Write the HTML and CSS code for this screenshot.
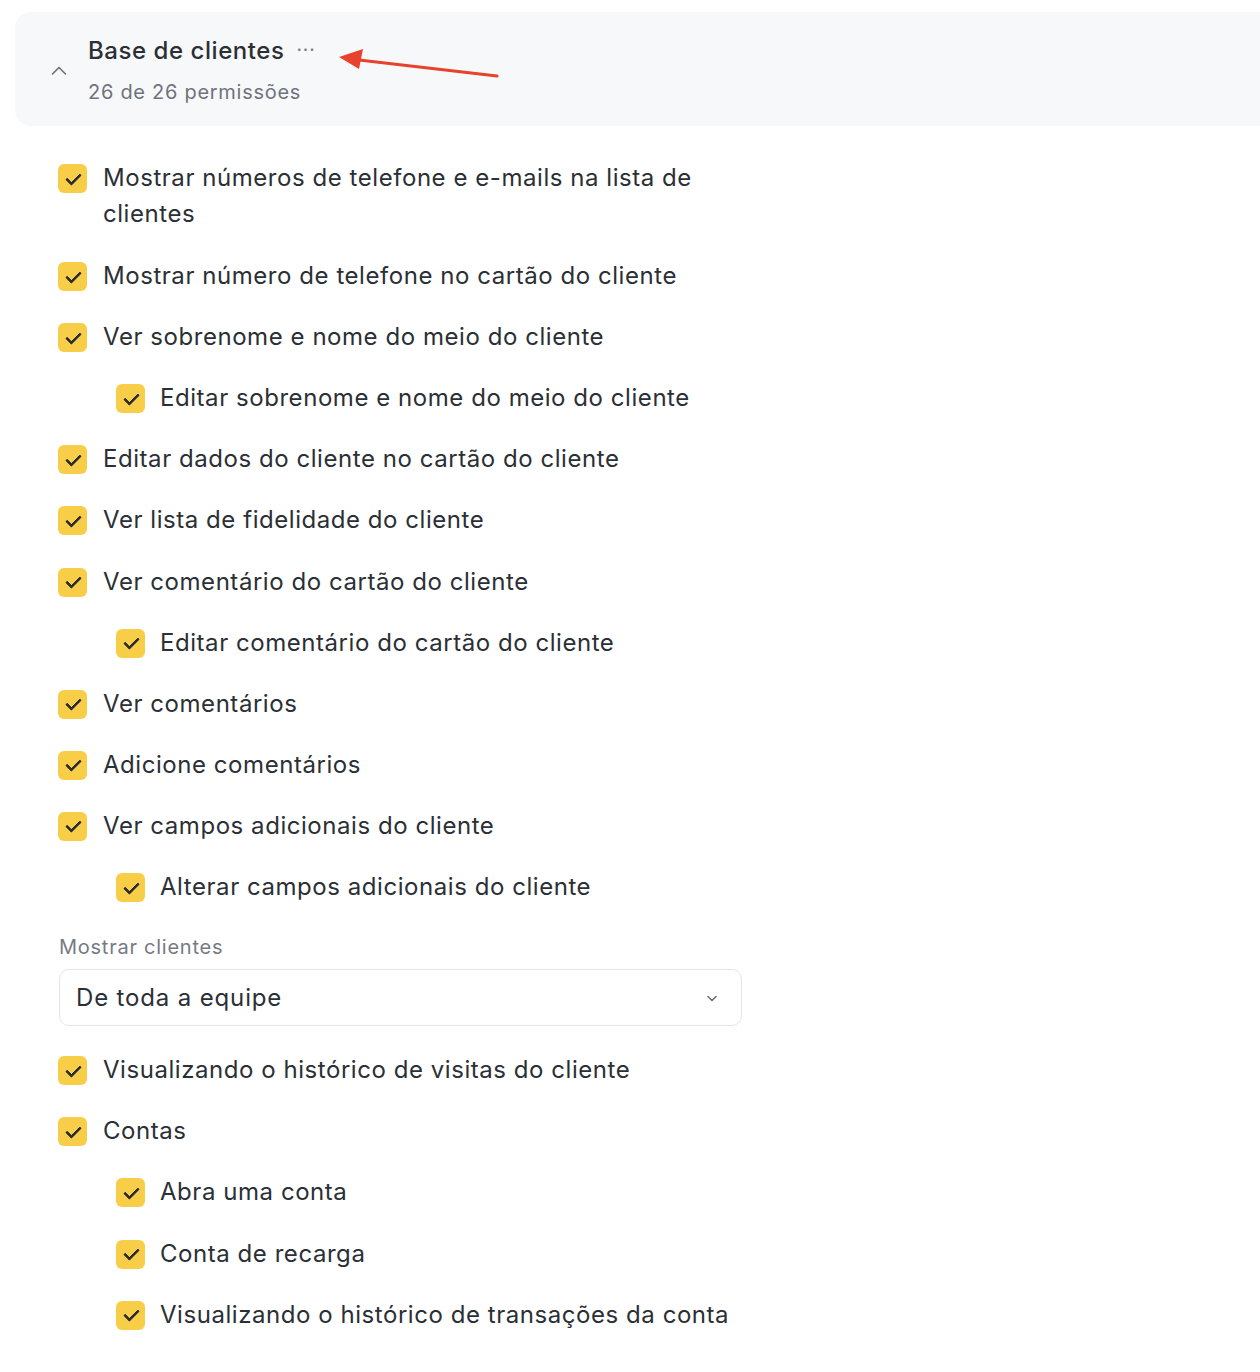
FILE: index.html
```html
<!DOCTYPE html>
<html lang="pt">
<head>
    <meta charset="UTF-8">
    <meta name="viewport" content="width=device-width, initial-scale=1.0">
    <title>Base de clientes - permissões</title>
    <link rel="stylesheet" href="styles.css">
</head>
<body>

<div class="page">
    <!-- Section header -->
    <div class="section-header">
        <svg class="chevron-up" width="16" height="16" viewBox="0 0 16 16" fill="none">
            <path d="M1.5 11L8 4.5L14.5 11" stroke="#6b6f78" stroke-width="1.6" stroke-linecap="round" stroke-linejoin="round"/>
        </svg>
        <div class="section-titles">
            <div class="section-title">
                <span>Base de clientes</span>
                <span class="more">&middot;&middot;&middot;</span>
            </div>
            <div class="section-sub">26 de 26 permissões</div>
        </div>
        <!-- annotation arrow -->
        <svg class="annotation" width="180" height="40" viewBox="0 0 180 40" fill="none">
            <line x1="160" y1="29" x2="22" y2="13" stroke="#e8422c" stroke-width="3.2" stroke-linecap="round"/>
            <polygon points="2,10 26,2 22,22" fill="#e8422c"/>
        </svg>
    </div>

    <!-- Permission list -->
    <div class="perm-list">
        <label class="perm"><span class="box"></span><span class="text">Mostrar números de telefone e e-mails na lista de clientes</span></label>
        <label class="perm"><span class="box"></span><span class="text">Mostrar número de telefone no cartão do cliente</span></label>
        <label class="perm"><span class="box"></span><span class="text">Ver sobrenome e nome do meio do cliente</span></label>
        <label class="perm sub"><span class="box"></span><span class="text">Editar sobrenome e nome do meio do cliente</span></label>
        <label class="perm"><span class="box"></span><span class="text">Editar dados do cliente no cartão do cliente</span></label>
        <label class="perm"><span class="box"></span><span class="text">Ver lista de fidelidade do cliente</span></label>
        <label class="perm"><span class="box"></span><span class="text">Ver comentário do cartão do cliente</span></label>
        <label class="perm sub"><span class="box"></span><span class="text">Editar comentário do cartão do cliente</span></label>
        <label class="perm"><span class="box"></span><span class="text">Ver comentários</span></label>
        <label class="perm"><span class="box"></span><span class="text">Adicione comentários</span></label>
        <label class="perm"><span class="box"></span><span class="text">Ver campos adicionais do cliente</span></label>
        <label class="perm sub"><span class="box"></span><span class="text">Alterar campos adicionais do cliente</span></label>

        <div class="field">
            <div class="field-label">Mostrar clientes</div>
            <div class="select">
                <span>De toda a equipe</span>
                <svg width="14" height="14" viewBox="0 0 14 14" fill="none">
                    <path d="M3 5.5L7 9.5L11 5.5" stroke="#6b6f78" stroke-width="1.6" stroke-linecap="round" stroke-linejoin="round"/>
                </svg>
            </div>
        </div>

        <label class="perm"><span class="box"></span><span class="text">Visualizando o histórico de visitas do cliente</span></label>
        <label class="perm"><span class="box"></span><span class="text">Contas</span></label>
        <label class="perm sub"><span class="box"></span><span class="text">Abra uma conta</span></label>
        <label class="perm sub"><span class="box"></span><span class="text">Conta de recarga</span></label>
        <label class="perm sub"><span class="box"></span><span class="text">Visualizando o histórico de transações da conta</span></label>
    </div>
</div>

</body>
</html>
```

FILE: styles.css
```css
/* General Reset */
* {
    box-sizing: border-box;
    margin: 0;
    padding: 0;
}

body {
    font-family: Inter, "Noto Sans", sans-serif;
    background-color: #fff;
    color: #2b2f36;
    overflow: hidden;
}

.page {
    padding-top: 12px;
    padding-left: 15px;
}

/* Section header */
.section-header {
    position: relative;
    display: flex;
    align-items: center;
    gap: 21px;
    margin-right: -30px;
    padding: 23px 0 20px 36px;
    background-color: #f7f8fa;
    border-radius: 16px;
}

.section-title {
    display: flex;
    align-items: center;
    gap: 12px;
    font-size: 24px;
    line-height: 32px;
    font-weight: 500;
    letter-spacing: 0.55px;
    color: #2b2f36;
}

.more {
    font-size: 18px;
    letter-spacing: 1px;
    color: #7b7f88;
    position: relative;
    top: -1px;
}

.section-sub {
    margin-top: 11px;
    font-size: 20px;
    line-height: 28px;
    letter-spacing: 0.72px;
    color: #6f737d;
}

.annotation {
    position: absolute;
    left: 322px;
    top: 35px;
}

/* Permission list */
.perm-list {
    width: 684px;
    margin: 34px 0 0 43px;
    display: flex;
    flex-direction: column;
    gap: 25.1px;
}

.perm {
    display: flex;
    align-items: flex-start;
    gap: 16px;
    font-size: 24px;
    line-height: 36px;
    letter-spacing: 0.55px;
    color: #2b2f36;
}

.perm:first-child {
    margin-bottom: 1px;
}

.perm.sub {
    padding-left: 58px;
    gap: 15px;
}

.box {
    flex: none;
    position: relative;
    width: 29px;
    height: 29px;
    margin-top: 4px;
    border-radius: 6px;
    background-color: #f8cd47;
}

.box::after {
    content: "";
    position: absolute;
    left: 10.5px;
    top: 5.5px;
    width: 6px;
    height: 12px;
    border-right: 3px solid #2a2c30;
    border-bottom: 3px solid #2a2c30;
    border-radius: 1px;
    transform: rotate(45deg);
}

/* Select field */
.field {
    margin-top: 3px;
}

.field-label {
    font-size: 20px;
    line-height: 28px;
    letter-spacing: 0.75px;
    color: #767a84;
    margin-bottom: 8px;
    margin-left: 1px;
}

.select {
    display: flex;
    align-items: center;
    justify-content: space-between;
    height: 57px;
    margin-left: 1px;
    margin-bottom: 1px;
    padding: 0 22px 0 16px;
    border: 1px solid #e3e4ea;
    border-radius: 10px;
    font-size: 24px;
    letter-spacing: 0.85px;
    color: #2b2f36;
}
```
